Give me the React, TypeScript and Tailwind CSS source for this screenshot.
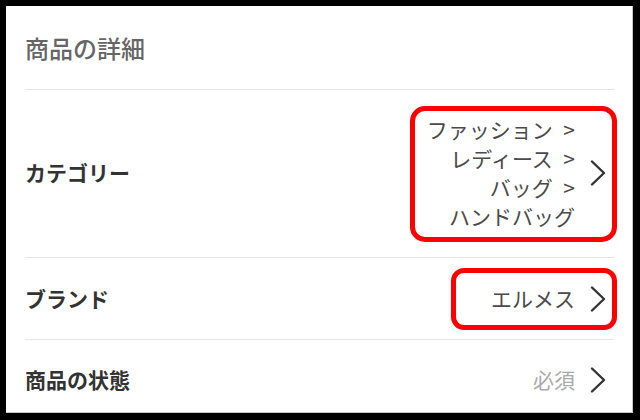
import React from 'react'

function Chevron() {
  return (
    <svg width="16" height="26" viewBox="0 0 16 26" fill="none" stroke="#333" strokeWidth="2.4" strokeLinecap="round" strokeLinejoin="round" className="shrink-0">
      <polyline points="2,1.5 14,13 2,24.5" />
    </svg>
  )
}

const font = { fontFamily: '"Noto Sans CJK JP", "Noto Sans", sans-serif' }

export default function App() {
  return (
    <div className="w-[640px] h-[420px] bg-black overflow-hidden pt-[6px] pl-[6px] pr-[7px]" style={font}>
      <div className="h-[407px] bg-white border-r border-b border-[#c8c8c8] overflow-hidden pl-[19px] pr-[18px]">
        <div className="h-[84px] flex items-center border-b border-[#e6e6e6]">
          <span className="text-[24px] font-medium text-[#666] pt-[1px]">商品の詳細</span>
        </div>

        <div className="relative flex items-center justify-between pt-[25px] pb-[26px] border-b border-[#e6e6e6]">
          <span className="text-[21px] font-bold text-[#333]">カテゴリー</span>
          <div className="flex items-center gap-[15px] pr-[8px]">
            <div className="text-right text-[21px] leading-[29px] text-[#4a4a4a]">
              <div>ファッション{'\u2002'}&gt;</div>
              <div>レディース{'\u2002'}&gt;</div>
              <div>バッグ{'\u2002'}&gt;</div>
              <div>ハンドバッグ</div>
            </div>
            <Chevron />
          </div>
          <div className="absolute right-[-3px] top-[16px] bottom-[15px] w-[207px] border-[5px] border-[#ff0000] rounded-[15px]" />
        </div>

        <div className="relative flex items-center justify-between py-[26px] border-b border-[#e6e6e6]">
          <span className="text-[21px] font-bold text-[#333] leading-[29px]">ブランド</span>
          <div className="flex items-center gap-[15px] pr-[8px]">
            <span className="text-[21px] leading-[29px] text-[#4a4a4a]">エルメス</span>
            <Chevron />
          </div>
          <div className="absolute right-[-3px] top-[10px] bottom-[9px] w-[166px] border-[5px] border-[#ff0000] rounded-[13px]" />
        </div>

        <div className="flex items-center justify-between py-[25px]">
          <span className="text-[21px] font-bold text-[#333] leading-[29px]">商品の状態</span>
          <div className="flex items-center gap-[15px] pr-[8px]">
            <span className="text-[21px] leading-[29px] text-[#aaa]">必須</span>
            <Chevron />
          </div>
        </div>
      </div>
    </div>
  )
}
